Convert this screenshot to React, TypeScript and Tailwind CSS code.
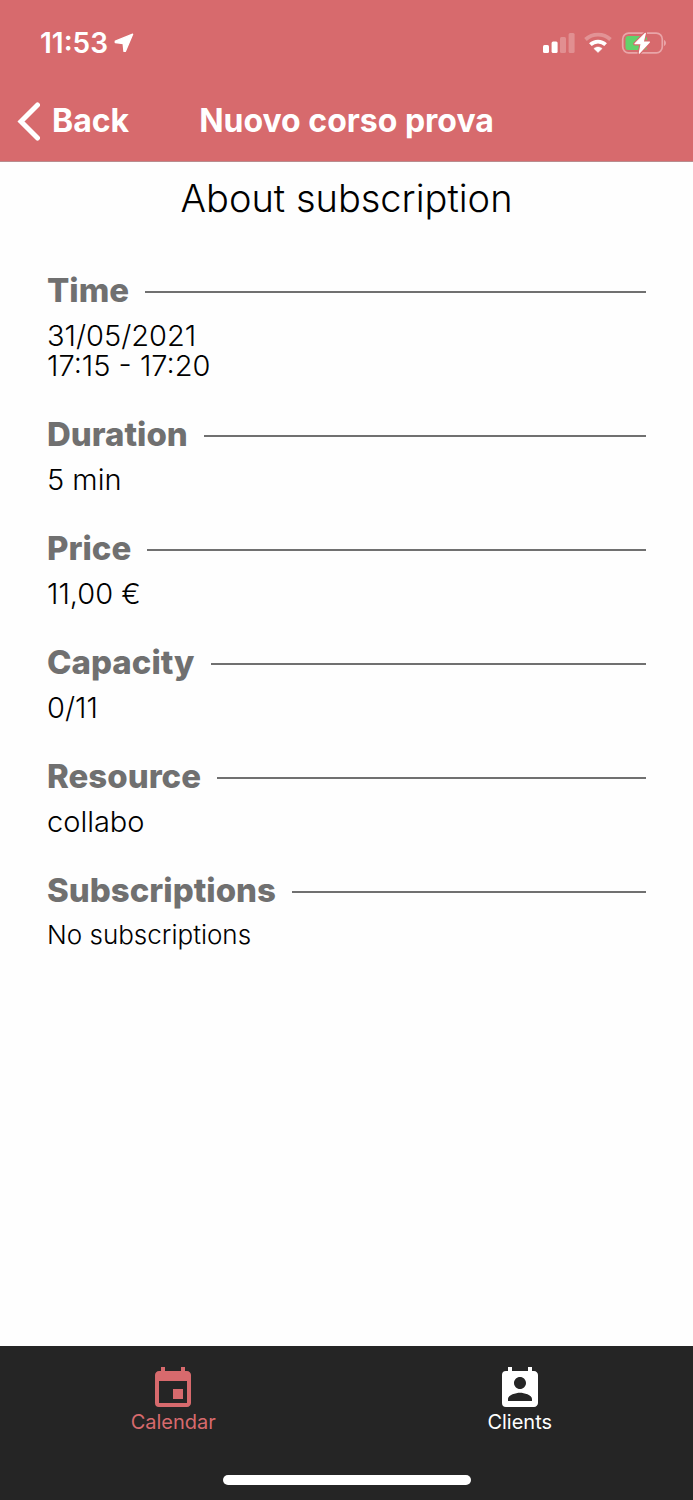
import { MdEvent, MdPermContactCalendar } from "react-icons/md";

type Section = { title: string; lines: string[]; small?: boolean };

const sections: Section[] = [
  { title: "Time", lines: ["31/05/2021", "17:15 - 17:20"] },
  { title: "Duration", lines: ["5 min"] },
  { title: "Price", lines: ["11,00 €"] },
  { title: "Capacity", lines: ["0/11"] },
  { title: "Resource", lines: ["collabo"] },
  { title: "Subscriptions", lines: ["No subscriptions"], small: true },
];

function StatusBar() {
  return (
    <div className="flex h-20 items-center justify-between pt-[6px] pr-[26px] pl-10">
      <div className="flex items-center gap-[6px]">
        <span className="text-[28px] leading-8 font-semibold">11:53</span>
        <svg viewBox="0 0 20 20" className="size-5" fill="currentColor" stroke="currentColor" strokeWidth="1.4" strokeLinejoin="round" aria-hidden="true">
          <path d="M18.6 1.2 11.3 18.4 10 18.4 9.2 10.6 1.3 9.5 1.3 8.2Z" />
        </svg>
      </div>
      <div className="flex items-center gap-2">
        <svg viewBox="0 0 34 22" className="h-[22px] w-[34px]" fill="currentColor" aria-hidden="true">
          <rect x="2" y="13" width="6" height="8" rx="1.5" />
          <rect x="10.6" y="9.5" width="6" height="11.5" rx="1.5" />
          <rect x="19" y="5" width="6" height="16" rx="1.5" opacity=".25" />
          <rect x="27.6" y="1" width="6" height="20" rx="1.5" opacity=".25" />
        </svg>
        <svg viewBox="0 0 30 22" className="h-[22px] w-[30px]" fill="none" stroke="currentColor" aria-hidden="true">
          <path d="M2.5 7.5C9.7.9 20.3.9 27.5 7.5" strokeWidth="3.8" opacity=".28" />
          <path d="M7.4 12.6C11.7 8.5 18.3 8.5 22.6 12.6" strokeWidth="3.8" />
          <path d="M15 20.6 10.8 16.5C13.1 14.4 16.9 14.4 19.2 16.5Z" fill="currentColor" strokeWidth=".4" />
        </svg>
        <svg viewBox="0 0 46 24" className="h-6 w-[46px]" aria-hidden="true">
          <rect x="1.7" y="2.2" width="39.6" height="19.6" rx="6" fill="none" stroke="#e9a5a8" strokeWidth="1.7" />
          <path d="M43 9c2.6.7 2.6 5.3 0 6Z" fill="#e9a5a8" />
          <rect x="4.5" y="5" width="21.5" height="14" rx="2.5" fill="#62d26b" />
          <path d="M24.3 2.3 14 12.7h6.2L18.3 22.1 28.4 11h-6.2Z" fill="#d76a6d" stroke="#d76a6d" strokeWidth="3.6" strokeLinejoin="round" />
          <path d="M24.3 2.3 14 12.7h6.2L18.3 22.1 28.4 11h-6.2Z" fill="#fff" stroke="#fff" strokeWidth="1.2" strokeLinejoin="round" />
        </svg>
      </div>
    </div>
  );
}

export default function App() {
  return (
    <div className="flex min-h-screen flex-col bg-[#fefefe] font-['Inter',sans-serif] text-black">
      <header className="border-b border-[#b98c8e] bg-[#d76a6d] text-white">
        <StatusBar />
        <div className="grid h-[81px] grid-cols-[1fr_auto_1fr] items-center px-4">
          <button type="button" className="flex items-center gap-3 justify-self-start text-[32px] leading-10 font-bold">
            <svg viewBox="0 0 24 40" className="h-10 w-6" fill="none" stroke="currentColor" strokeWidth="5" strokeLinecap="round" strokeLinejoin="miter" aria-hidden="true">
              <path d="M21.5 4 5 20.5 21.5 37" />
            </svg>
            Back
          </button>
          <h1 className="text-[32px] leading-10 font-bold">Nuovo corso prova</h1>
        </div>
      </header>

      <main className="flex-1 px-[47px] pt-3">
        <h2 className="text-center text-[38px] leading-12 font-light">About subscription</h2>
        <div className="flex flex-col gap-[33px] pt-12">
          {sections.map((s) => (
            <section key={s.title}>
              <div className="mb-[11px] flex items-center gap-4">
                <h3 className="text-[33px] leading-10 font-extrabold text-[#707070]">{s.title}</h3>
                <div className="mt-[3px] h-[2px] flex-1 bg-[#707070]" />
              </div>
              {s.lines.map((line) => (
                <p key={line} className={s.small ? "text-[26px] leading-7 font-light" : "text-[29px] leading-[30px] font-light"}>
                  {line}
                </p>
              ))}
            </section>
          ))}
        </div>
      </main>

      <footer className="bg-[#252525] pb-[15px]">
        <nav className="grid h-[129px] grid-cols-2 pt-[19px] text-xl leading-6">
          <a href="#calendar" aria-current="page" className="flex flex-col items-center text-[#d76a6d]">
            <MdEvent className="size-12" aria-hidden="true" />
            <span className="-mt-[3px]">Calendar</span>
          </a>
          <a href="#clients" className="flex flex-col items-center text-white">
            <MdPermContactCalendar className="size-12" aria-hidden="true" />
            <span className="-mt-[3px]">Clients</span>
          </a>
        </nav>
        <div className="mx-auto h-[10px] w-[248px] rounded-full bg-white" />
      </footer>
    </div>
  );
}
